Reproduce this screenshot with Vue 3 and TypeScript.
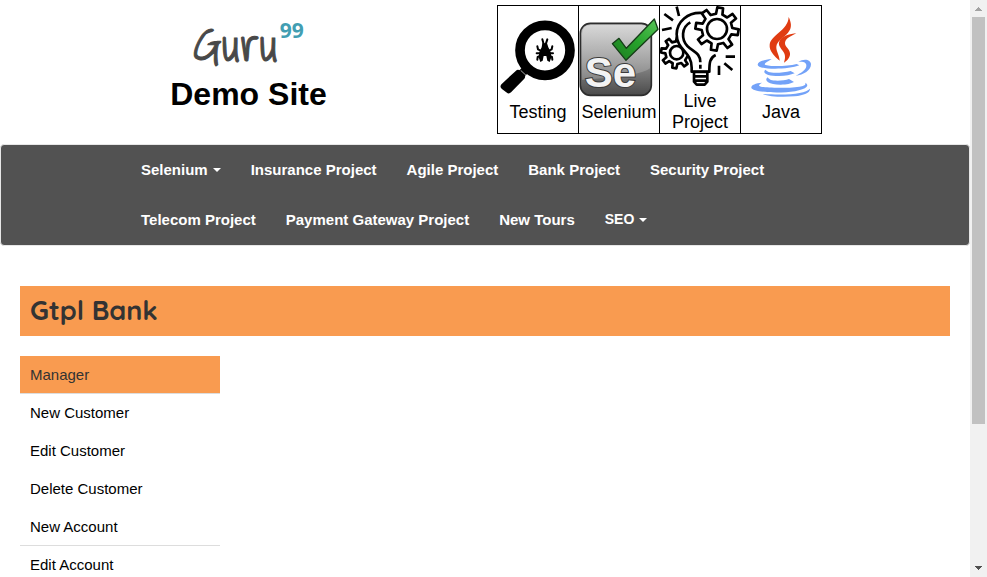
<script setup lang="ts">
interface NavItem {
  label: string
  dropdown?: boolean
  small?: boolean
}

interface MenuItem {
  label: string
  active?: boolean
  divided?: boolean
}

const navItems: NavItem[] = [
  { label: 'Selenium', dropdown: true },
  { label: 'Insurance Project' },
  { label: 'Agile Project' },
  { label: 'Bank Project' },
  { label: 'Security Project' },
  { label: 'Telecom Project' },
  { label: 'Payment Gateway Project' },
  { label: 'New Tours' },
  { label: 'SEO', dropdown: true, small: true },
]

const menuItems: MenuItem[] = [
  { label: 'Manager', active: true, divided: true },
  { label: 'New Customer' },
  { label: 'Edit Customer' },
  { label: 'Delete Customer' },
  { label: 'New Account', divided: true },
  { label: 'Edit Account' },
]

/* Closed outline of a gear wheel with evenly spaced tapered teeth. */
function gear(cx: number, cy: number, outer: number, inner: number, teeth: number, turn: number): string {
  const step = (Math.PI * 2) / teeth
  const points: string[] = []
  for (let i = 0; i < teeth; i++) {
    const mid = turn + i * step
    const corners: [number, number][] = [
      [inner, -0.27],
      [outer, -0.17],
      [outer, 0.17],
      [inner, 0.27],
    ]
    for (const [r, offset] of corners) {
      const a = mid + offset * step
      points.push(`${(cx + r * Math.cos(a)).toFixed(1)} ${(cy + r * Math.sin(a)).toFixed(1)}`)
    }
  }
  return `M${points.join('L')}Z`
}

const largeGear = gear(186, 87, 65, 46, 8, 0.15)
const smallGear = gear(65, 158, 47, 34, 8, 0.15)
</script>

<template>
  <div class="shell">
    <div class="page">
      <header class="top">
        <div class="brand">
          <a class="logo" href="#">Guru<sup>99</sup></a>
          <h1>Demo Site</h1>
        </div>
        <ul class="tiles">
          <li>
            <a href="#">
              <svg viewBox="24 51 240 240" aria-hidden="true">
                <circle cx="165" cy="151" r="75" fill="none" stroke="#000" stroke-width="29" />
                <path d="M90 226l20-20" stroke="#000" stroke-width="24" />
                <path d="M84 220l11 10-39 40-14-11z" stroke="#000" stroke-width="20" stroke-linejoin="round" />
                <path d="M92 211l16 15" stroke="#fff" stroke-width="2" />
                <path d="M157 130h14l4 12 7 14 2 16-5 14-7-4-3-14h-8l-3 14-7 4-5-14 2-16 7-14z" />
                <path
                  d="M161 133l-4-15M167 133l5-15M152 152l-8-4-2-9M177 152l8-4 2-9M150 160h-10M179 160h10M150 168l-7 3-1 8M179 168l7 3 1 8"
                  fill="none" stroke="#000" stroke-width="6" stroke-linecap="round" stroke-linejoin="round"
                />
              </svg>
              <span>Testing</span>
            </a>
          </li>
          <li>
            <a href="#">
              <svg viewBox="267 51 240 240" aria-hidden="true">
                <defs>
                  <linearGradient id="se-box" x1="0" y1="0" x2="0" y2="1">
                    <stop offset="0" stop-color="#bdbdbd" />
                    <stop offset="0.55" stop-color="#8b8b8b" />
                    <stop offset="1" stop-color="#4a4a4a" />
                  </linearGradient>
                  <linearGradient id="se-shine" x1="0" y1="0" x2="0" y2="1">
                    <stop offset="0" stop-color="#e4e4e4" />
                    <stop offset="1" stop-color="#929292" />
                  </linearGradient>
                  <linearGradient id="se-check" x1="1" y1="0" x2="0" y2="1">
                    <stop offset="0" stop-color="#58c558" />
                    <stop offset="0.5" stop-color="#27a32c" />
                    <stop offset="1" stop-color="#1c7a20" />
                  </linearGradient>
                </defs>
                <rect x="271" y="70" width="213" height="216" rx="30" fill="url(#se-box)" stroke="#2d2d2d" stroke-width="5" />
                <path d="M276 103q0-28 28-28h148q28 0 28 28v102q-30 25-204 34z" fill="url(#se-shine)" opacity="0.7" />
                <text x="284" y="261" class="se" stroke="#3b3b3b" stroke-width="6" fill="#f3f3f3" paint-order="stroke">Se</text>
                <path
                  d="M367 131l20-16 22 30 84-88 11 31-96 93z"
                  fill="url(#se-check)" stroke="#163d18" stroke-width="4" stroke-linejoin="round"
                />
              </svg>
              <span>Selenium</span>
            </a>
          </li>
          <li>
            <a href="#">
              <svg viewBox="15 18 240 240" aria-hidden="true">
                <g fill="#fff" stroke="#000" stroke-width="8" stroke-linejoin="round">
                  <path :d="smallGear" />
                  <circle cx="65" cy="158" r="20" />
                  <path d="M145 39C98 34 65 66 65 103c0 48 45 50 45 112h53c0-25 6-42 19-50l-10-60z" stroke="none" />
                  <path d="M145 39C98 34 65 66 65 103c0 48 45 50 45 100v12h53c0-25 1-42 19-50" fill="none" />
                  <path d="M106 67C78 82 79 119 97 138c18 18 39 20 39 49M136 194v12" fill="none" />
                  <path :d="largeGear" />
                  <circle cx="186" cy="87" r="30" />
                  <path d="M117 216v29l8 9h24l8-9v-29zM117 229h40M117 242h40" />
                  <path
                    d="M28 42l26 19M65 20l7 28M21 90l29-6M212 170h28M208 190l24 20M192 197v28"
                    fill="none"
                  />
                </g>
              </svg>
              <span>Live Project</span>
            </a>
          </li>
          <li>
            <a href="#">
              <svg viewBox="258 51 240 240" aria-hidden="true">
                <g fill="#e03c12">
                  <path d="M401 51c8 17 11 32-2 47-14 16-34 25-35 42-1 13 9 25 10 42-16-14-32-30-30-48 3-28 55-43 57-83z" />
                  <path d="M424 100c-15 9-32 14-34 28-1 12 14 18 15 32 1 12-7 21-18 28 4-14 5-22-2-33-8-12-18-21-11-33 9-15 31-20 50-22z" />
                </g>
                <g fill="#73a2f8">
                  <path d="M350 177c-22 2-42 8-42 17 0 16 91 16 125 2l-8-4c-31 8-83 8-95 2-4-4 10-10 20-17z" />
                  <path d="M430 186c16-12 38-8 38 7 0 18-22 32-46 34 17-8 31-17 32-29 1-10-9-14-24-12z" />
                  <path d="M331 209c-11 11 8 19 41 19 21 0 35-3 47-8l-12-7c-22 6-56 7-66 3-4-2-6-4-10-7z" />
                  <path d="M338 232c-13 10 4 22 39 22 19 0 30-3 40-8l-15-9c-15 6-45 6-54 3-4-2-7-4-10-8z" />
                  <path d="M322 248c-22 1-34 8-33 15 3 18 144 21 166-3 4-5 1-9-4-12 2 8-5 10-18 12-39 6-113 4-120-2-3-4 3-7 9-10z" />
                  <path d="M465 266c-14 15-60 20-142 16 20 9 63 10 96 7 29-3 47-11 46-23z" />
                </g>
              </svg>
              <span>Java</span>
            </a>
          </li>
        </ul>
      </header>

      <nav class="bar">
        <ul>
          <li v-for="item in navItems" :key="item.label">
            <a href="#" :class="{ small: item.small }">
              {{ item.label }}<i v-if="item.dropdown" class="caret"></i>
            </a>
          </li>
        </ul>
      </nav>

      <main>
        <h2>Gtpl Bank</h2>
        <ul class="menu">
          <li v-for="item in menuItems" :key="item.label" :class="{ active: item.active, divided: item.divided }">
            <a href="#">{{ item.label }}</a>
          </li>
        </ul>
      </main>
    </div>

    <div class="scroll" aria-hidden="true">
      <svg viewBox="0 0 17 17"><path d="M8 7h1v1h1v1h1v1h1v1H5v-1h1V9h1V8h1z" fill="#a3a3a3" /></svg>
      <div class="track"><div class="thumb"></div></div>
      <svg viewBox="0 0 17 17"><path d="M5 6h7v1h-1v1h-1v1H9v1H8V9H7V8H6V7H5z" fill="#505050" /></svg>
    </div>
  </div>
</template>

<style>
body {
  margin: 0;
  background: #fff;
}
</style>

<style scoped>
.shell {
  display: grid;
  grid-template-columns: minmax(0, 1fr) 17px;
  height: 100vh;
  overflow: hidden;
  font-family: "Liberation Sans", Arial, sans-serif;
  color: #000;
}

.page {
  overflow: hidden;
}

a {
  color: inherit;
  text-decoration: none;
}

ul {
  list-style: none;
  margin: 0;
  padding: 0;
}

.top {
  display: grid;
  grid-template-columns: 497px 1fr;
  padding-top: 5px;
}

.brand {
  display: flex;
  flex-direction: column;
  align-items: center;
  padding-top: 15px;
}

.logo {
  display: flex;
  align-items: flex-start;
  height: 54px;
  font-family: "Shadows Into Light", "Patrick Hand", "Indie Flower", Caveat, "DejaVu Sans Condensed", sans-serif;
  font-size: 48px;
  line-height: 48px;
  color: #484848;
  -webkit-text-stroke: 1px #484848;
}

.logo sup {
  margin-left: 2px;
  font-family: "Open Sans", sans-serif;
  font-size: 21px;
  font-weight: 700;
  line-height: 21px;
  color: #429eb2;
  -webkit-text-stroke: 0;
}

h1 {
  margin: 0;
  font-size: 32px;
  line-height: 40px;
}

.tiles {
  display: flex;
  justify-self: start;
  border: 1px solid #000;
}

.tiles li {
  display: flex;
  align-items: center;
  width: 80px;
  min-height: 127px;
}

.tiles li + li {
  border-left: 1px solid #000;
}

.tiles a {
  display: flex;
  flex-direction: column;
  gap: 5px;
  width: 100%;
  font-size: 18px;
  line-height: 21px;
  text-align: center;
}

.tiles svg {
  display: block;
  width: 80px;
  height: 80px;
}

.se {
  font: bold 126px "Liberation Sans", Arial, sans-serif;
}

.bar {
  margin-top: 10px;
  border: 1px solid #e7e7e7;
  border-radius: 4px;
  background: #525252;
}

.bar ul {
  display: flex;
  flex-wrap: wrap;
  max-width: 718px;
  margin: 0 auto;
}

.bar a {
  display: flex;
  align-items: center;
  height: 48px;
  padding: 0 15px 2px;
  font-size: 15px;
  font-weight: bold;
  color: #fff;
}

.bar a.small {
  font-size: 14px;
}

.caret {
  margin: 2px 0 0 5px;
  border-top: 4px solid #fff;
  border-right: 4px solid transparent;
  border-left: 4px solid transparent;
}

main {
  padding: 40px 20px 0;
}

h2 {
  margin: 0 0 20px;
  padding: 0 10px 2px;
  background: #f99b50;
  color: #333;
  font-family: Quicksand, Lato, sans-serif;
  font-size: 27px;
  font-weight: bold;
  line-height: 48px;
}

.menu {
  width: 200px;
  font-size: 15px;
}

.menu li {
  border-bottom: 1px solid transparent;
}

.menu .divided {
  border-bottom-color: #ddd;
}

.menu a {
  display: block;
  padding: 0 10px;
  line-height: 37px;
}

.menu .active a {
  background: #f99b50;
  color: #333;
}

.scroll {
  display: flex;
  flex-direction: column;
  background: #f1f1f1;
}

.scroll svg {
  display: block;
  height: 17px;
}

.track {
  flex: 1;
  padding: 0 2px;
}

.thumb {
  height: 75%;
  background: #c1c1c1;
}
</style>
